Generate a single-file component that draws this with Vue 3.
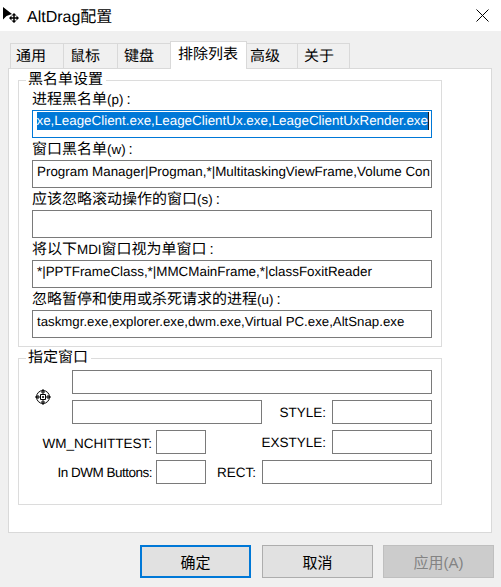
<template>
  <div class="dialog">
    <div class="titlebar">
      <svg class="app-icon" width="25" height="25" viewBox="0 0 25 25">
        <path d="M3 4v12.500l3.500-3.500 5.500-2z" fill="#000" />
        <path d="M14 11v8M10 15h8" stroke="#000" stroke-width="1.500" />
        <path d="M14 10l-2.500 2.500h5zM14 20l-2.500-2.500h5zM9 15l2.500-2.500v5zM19 15l-2.500-2.500v5z" fill="#000" />
      </svg>
      <span class="title">AltDrag配置</span>
      <svg class="close" width="13" height="13" viewBox="0 0 13 13">
        <path d="M0.500 0.500l12 12M12.500 0.500l-12 12" stroke="#000" stroke-width="1" />
      </svg>
    </div>

    <div class="tabs">
      <div
        v-for="t in tabs"
        :key="t.name"
        class="tab"
        :class="{ active: t.active }"
        :style="{ width: t.width + 'px', paddingLeft: t.pad + 'px' }"
      >{{ t.name }}</div>
    </div>

    <div class="panel">
      <fieldset class="group blacklist">
        <legend>黑名单设置</legend>
        <div v-for="f in lists" :key="f.value" class="field">
          <label>
            <span
              v-for="(part, i) in f.label"
              :key="i"
              :class="{ latin: i % 2 === 1 }"
            >{{ part }}</span><span class="colon">:</span>
          </label>
          <div v-if="f.selected" class="box selected">
            <div class="sel-clip"><span>{{ f.value }}</span></div>
          </div>
          <div v-else class="box" :class="{ tight: f.tight }">{{ f.value }}</div>
        </div>
      </fieldset>

      <fieldset class="group target">
        <legend>指定窗口</legend>
        <div class="target-grid">
          <svg class="finder" width="16" height="16" viewBox="0 0 16 16">
            <circle cx="8" cy="8" r="6.500" fill="none" stroke="#000" />
            <path d="M8 0v16M0 8h16" stroke="#000" />
            <path d="M5.500 5.500h5v5h-5z" fill="#fff" stroke="#000" />
            <path d="M8 7v2M7 8h2" stroke="#000" />
            <path d="M6 3h4M6 13h4M3 6v4M13 6v4" stroke="#000" />
          </svg>
          <div class="box small title-box"></div>
          <div class="box small class-box"></div>
          <span class="lbl style-lbl">STYLE:</span>
          <div class="box small style-box"></div>
          <span class="lbl hit-lbl">WM_NCHITTEST:</span>
          <div class="box small hit-box"></div>
          <span class="lbl ex-lbl">EXSTYLE:</span>
          <div class="box small ex-box"></div>
          <span class="lbl dwm-lbl">In DWM Buttons:</span>
          <div class="box small dwm-box"></div>
          <span class="lbl rect-lbl">RECT:</span>
          <div class="box small rect-box"></div>
        </div>
      </fieldset>
    </div>

    <div class="buttons">
      <button class="btn default">确定</button>
      <button class="btn">取消</button>
      <button class="btn" disabled>应用(A)</button>
    </div>
  </div>
</template>

<script setup>
const tabs = [
  { name: '通用', width: 54, pad: 5 },
  { name: '鼠标', width: 54, pad: 6 },
  { name: '键盘', width: 53, pad: 6 },
  { name: '排除列表', width: 77, pad: 7, active: true },
  { name: '高级', width: 51, pad: 3 },
  { name: '关于', width: 52, pad: 6 },
]

// label 里奇数下标是西文片段，字号比中文小
const lists = [
  {
    label: ['进程黑名单', '(p)'],
    value: 'xe,LeageClient.exe,LeageClientUx.exe,LeageClientUxRender.exe',
    selected: true,
  },
  { label: ['窗口黑名单', '(w)'], value: 'Program Manager|Progman,*|MultitaskingViewFrame,Volume Con' },
  { label: ['应该忽略滚动操作的窗口', '(s)'], value: '' },
  { label: ['将以下', 'MDI', '窗口视为单窗口'], value: '*|PPTFrameClass,*|MMCMainFrame,*|classFoxitReader' },
  {
    label: ['忽略暂停和使用或杀死请求的进程', '(u)'],
    value: 'taskmgr.exe,explorer.exe,dwm.exe,Virtual PC.exe,AltSnap.exe',
    tight: true,
  },
]
</script>

<style>
html, body { margin: 0; background: #f0f0f0; }
</style>

<style scoped>
.dialog {
  width: 501px;
  height: 587px;
  overflow: hidden;
  background: #f0f0f0;
  color: #000;
  font-family: "Liberation Sans", "Noto Sans CJK SC", sans-serif;
  font-size: 15px;
  text-rendering: geometricPrecision;
}
.titlebar {
  display: flex;
  align-items: center;
  height: 31px;
  background: #fff;
  padding-right: 12px;
}
.title { margin: 0 0 2px 2px; font-size: 16px; flex: 1; }
.tabs {
  display: flex;
  align-items: flex-end;
  height: 37px;
  padding-left: 10px;
}
.tab {
  box-sizing: border-box;
  height: 25px;
  border: 1px solid #d9d9d9;
  border-left-width: 0;
  border-bottom: 0;
  line-height: 26px;
}
.tab:first-child { border-left-width: 1px; }
.tab.active {
  height: 28px;
  margin-bottom: -1px;
  background: #fff;
  border-left-width: 1px;
  margin-left: -1px;
  position: relative;
  z-index: 1;
}
.panel {
  box-sizing: border-box;
  width: 484px;
  height: 465px;
  margin-left: 8px;
  padding: 2px 49px 0 9px;
  background: #fff;
  border: 1px solid #d9d9d9;
}
.group {
  margin: 0;
  padding: 0 9px 0 13px;
  border: 1px solid #dcdcdc;
  min-width: 0;
}
.group legend {
  margin-left: -6px;
  padding: 0 3px 0 2px;
  line-height: 18px;
}
.blacklist { height: 276px; box-sizing: border-box; }
.field { height: 50px; }
.field label { display: block; height: 21px; line-height: 21px; }
.latin { font-size: 13.400px; }
.colon { margin-left: 3px; }
.box {
  box-sizing: border-box;
  height: 28px;
  padding: 0 4px;
  line-height: 22px;
  white-space: nowrap;
  overflow: hidden;
  border: 1px solid #7a7a7a;
  background: #fff;
  font-size: 13.400px;
}
.box.tight { font-size: 13.250px; }
.box.small { height: 24px; }
.box.selected {
  border-color: #0078d7;
  padding: 0;
}
.sel-clip {
  display: flex;
  justify-content: flex-end;
  overflow: hidden;
  margin: 1px 2px 0 4px;
  line-height: 18px;
}
.sel-clip span {
  flex: none;
  background: #0078d7;
  color: #fff;
  border-right: 1px solid #1a1a1a;
}
.target {
  box-sizing: border-box;
  height: 156px;
  margin-top: 2px;
}
.target-grid {
  display: grid;
  grid-template-columns: 40px 84px 50px 56px 70px 100px;
  grid-auto-rows: 24px;
  row-gap: 6px;
  margin-top: 3px;
  align-items: center;
}
.lbl {
  text-align: right;
  padding-right: 6px;
  font-size: 13.500px;
  white-space: nowrap;
}
.finder { grid-column: 1; grid-row: 1 / span 2; justify-self: start; margin-left: 3px; }
.title-box { grid-column: 2 / -1; grid-row: 1; }
.class-box { grid-column: 2 / span 3; grid-row: 2; }
.style-lbl { grid-column: 5; grid-row: 2; }
.style-box { grid-column: 6; grid-row: 2; }
.hit-lbl { grid-column: 1 / span 2; grid-row: 3; padding-right: 4px; margin-top: 3px; }
.hit-box { grid-column: 3; grid-row: 3; }
.ex-lbl { grid-column: 4 / span 2; grid-row: 3; }
.ex-box { grid-column: 6; grid-row: 3; }
.dwm-lbl { grid-column: 1 / span 2; grid-row: 4; padding-right: 4px; letter-spacing: -0.500px; }
.dwm-box { grid-column: 3; grid-row: 4; }
.rect-lbl { grid-column: 4; grid-row: 4; }
.rect-box { grid-column: 5 / -1; grid-row: 4; }
.buttons {
  display: flex;
  justify-content: flex-end;
  gap: 10px;
  padding: 12px 7px 0 0;
}
.btn {
  box-sizing: border-box;
  width: 111px;
  height: 33px;
  padding: 0;
  background: #e1e1e1;
  border: 1px solid #adadad;
  font: inherit;
  color: #000;
}
.btn.default { border: 2px solid #0078d7; margin-right: 1px; }
.btn[disabled] { background: #cccccc; border-color: #bfbfbf; color: #838383; }
</style>
